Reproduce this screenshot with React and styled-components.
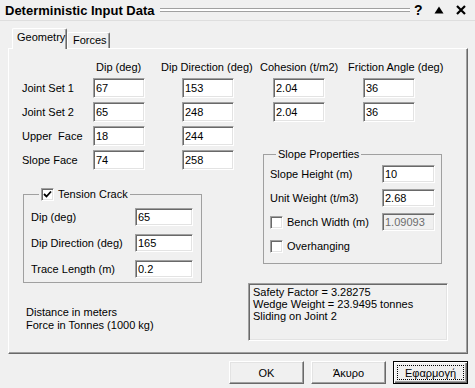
import React from 'react'
import styled, { createGlobalStyle } from 'styled-components'

const GlobalStyle = createGlobalStyle`
  html, body {
    margin: 0;
    padding: 0;
    background: #f0f0f0;
  }
  body {
    font-family: "Liberation Sans", Arial, sans-serif;
    font-size: 11px;
    color: #000;
  }
`

const Window = styled.div`
  width: 475px;
  height: 388px;
  background: #f0f0f0;
  overflow: hidden;
  display: flex;
  flex-direction: column;
`

const TitleBar = styled.div`
  height: 21px;
  box-sizing: border-box;
  display: flex;
  align-items: center;
  padding-left: 5px;
  border-bottom: 1px solid #dedede;
`

const TitleText = styled.div`
  font-size: 13px;
  font-weight: bold;
  white-space: nowrap;
`

const Grip = styled.div`
  flex: 1;
  height: 2px;
  margin: 0 4px 0 5px;
  background: #fff;
  border-top: 1px solid #a0a0a0;
  border-bottom: 1px solid #a0a0a0;
`

const Controls = styled.div`
  display: flex;
  align-items: center;
  gap: 12px;
  padding-right: 9px;
`

const HelpMark = styled.span`
  font-size: 14px;
  font-weight: bold;
  line-height: 14px;
  width: 8px;
`

const Body = styled.div`
  padding-left: 8px;
`

const TabStrip = styled.div`
  display: flex;
  align-items: flex-end;
  margin-top: 7px;
  padding-left: 4px;
  height: 20px;
`

const Tab = styled.div`
  position: relative;
  z-index: 1;
  box-sizing: border-box;
  width: ${p => p.$w}px;
  height: ${p => (p.$active ? 21 : 16)}px;
  margin-bottom: ${p => (p.$active ? -1 : 0)}px;
  padding: ${p => (p.$active ? '2px 0 0 4px' : '1px 0 0 5px')};
  line-height: 13px;
  background: #f0f0f0;
  border-top: 1px solid #fff;
  border-left: 1px solid #fff;
  border-right: 1px solid #696969;
  box-shadow: inset -1px 0 #a0a0a0;
  border-radius: 2px 2px 0 0;
  white-space: nowrap;
`

const Panel = styled.div`
  box-sizing: border-box;
  width: 460px;
  height: 306px;
  padding: 12px 0 0 13px;
  border-top: 1px solid #fff;
  border-left: 1px solid #fff;
  border-right: 1px solid #696969;
  border-bottom: 1px solid #696969;
  box-shadow: inset -1px -1px #a0a0a0;
`

const Table = styled.div`
  display: grid;
  grid-template-columns: ${p => p.$cols};
  row-gap: 4px;
  align-items: center;
`

const Header = styled.div`
  height: 13px;
  line-height: 13px;
  white-space: nowrap;
  margin-left: ${p => p.$shift || 0}px;
`

const Label = styled.div`
  white-space: nowrap;
  line-height: 13px;
`

const Field = styled.input`
  box-sizing: border-box;
  width: ${p => p.$w}px;
  height: ${p => p.$h || 20}px;
  margin: 0;
  padding: 0 0 0 2px;
  font: inherit;
  font-size: 11px;
  color: ${p => (p.disabled ? '#6d6d6d' : '#000')};
  background: ${p => (p.disabled ? '#f0f0f0' : '#fff')};
  border: 1px solid;
  border-color: #a0a0a0 #fff #fff #a0a0a0;
  box-shadow: inset 1px 1px #696969, inset -1px -1px #e3e3e3;
  outline: none;
`

const Lower = styled.div`
  display: flex;
  margin-top: 4px;
`

const LeftCol = styled.div`
  width: 226px;
  display: flex;
  flex-direction: column;
`

const RightCol = styled.div`
  display: flex;
  flex-direction: column;
  padding-top: 22px;
`

const Group = styled.fieldset`
  box-sizing: border-box;
  width: 179px;
  min-width: 0;
  margin: ${p => p.$margin};
  padding: ${p => p.$pad};
  border: 1px solid #a0a0a0;
`

const Legend = styled.legend`
  display: flex;
  align-items: center;
  gap: 4px;
  height: 13px;
  line-height: 13px;
  margin-left: ${p => p.$indent}px;
  padding: 0 2px;
`

const GroupGrid = styled.div`
  display: grid;
  grid-template-columns: ${p => p.$cols};
  row-gap: ${p => p.$gap}px;
  grid-auto-rows: 18px;
  align-items: center;
`

const CheckRow = styled.div`
  display: flex;
  align-items: center;
  gap: 4px;
  white-space: nowrap;
`

const Box = styled.span`
  box-sizing: border-box;
  width: 13px;
  height: 13px;
  flex: none;
  display: flex;
  align-items: center;
  justify-content: center;
  background: #fff;
  border: 1px solid;
  border-color: #a0a0a0 #fff #fff #a0a0a0;
  box-shadow: inset 1px 1px #696969, inset -1px -1px #e3e3e3;
`

const Notes = styled.div`
  margin: 23px 0 0 4px;
  line-height: 13px;
`

const Results = styled.div`
  box-sizing: border-box;
  width: 200px;
  height: 58px;
  margin: 19px 0 0 0;
  padding: 2px 4px;
  line-height: 12px;
  border: 1px solid;
  border-color: #a0a0a0 #fff #fff #a0a0a0;
  box-shadow: inset 1px 1px #696969, inset -1px -1px #e3e3e3;
`

const Footer = styled.div`
  display: flex;
  justify-content: flex-end;
  gap: 7px;
  padding: 7px 7px 0 0;
`

const Button = styled.div`
  position: relative;
  box-sizing: border-box;
  width: 75px;
  height: 23px;
  display: flex;
  align-items: center;
  justify-content: center;
  background: #f0f0f0;
  border: 1px solid;
  border-color: ${p => (p.$default ? '#000' : '#fff #696969 #696969 #fff')};
  box-shadow: ${p =>
    p.$default
      ? 'inset 1px 1px #fff, inset -1px -1px #696969, inset -2px -2px #a0a0a0'
      : 'inset -1px -1px #a0a0a0, inset 1px 1px #e3e3e3'};

  &::after {
    content: '';
    display: ${p => (p.$default ? 'block' : 'none')};
    position: absolute;
    inset: 3px 3px 3px 3px;
    border: 1px dotted #000;
  }
`

function Check({ checked }) {
  return (
    <Box>
      {checked && (
        <svg width="9" height="9" viewBox="0 0 9 9">
          <polyline points="1,4 3.5,6.5 8,1.5" fill="none" stroke="#000" strokeWidth="1.8" />
        </svg>
      )}
    </Box>
  )
}

const rows = [
  ['Joint Set 1', '67', '153', '2.04', '36'],
  ['Joint Set 2', '65', '248', '2.04', '36'],
]

const faces = [
  ['Upper\u00a0 Face', '18', '244'],
  ['Slope Face', '74', '258'],
]

export default function App() {
  return (
    <Window>
      <GlobalStyle />
      <TitleBar>
        <TitleText>Deterministic Input Data</TitleText>
        <Grip />
        <Controls>
          <HelpMark>?</HelpMark>
          <svg width="10" height="8" viewBox="0 0 10 8">
            <polygon points="5,0.5 9.5,7.5 0.5,7.5" fill="#000" />
          </svg>
          <svg width="10" height="10" viewBox="0 0 10 10">
            <path d="M1 1 L9 9 M9 1 L1 9" stroke="#000" strokeWidth="2.2" />
          </svg>
        </Controls>
      </TitleBar>

      <Body>
        <TabStrip>
          <Tab $active $w={55}>Geometry</Tab>
          <Tab $w={43}>Forces</Tab>
        </TabStrip>

        <Panel>
          <Table $cols="71px 89px 91px 90px 52px">
            <span />
            <Header $shift={3}>Dip (deg)</Header>
            <Header $shift={-21}>Dip Direction (deg)</Header>
            <Header $shift={-13}>Cohesion (t/m2)</Header>
            <Header $shift={-15}>Friction Angle (deg)</Header>
            {rows.map(r => (
              <React.Fragment key={r[0]}>
                <Label>{r[0]}</Label>
                {r.slice(1).map((v, i) => (
                  <Field key={i} $w={52} defaultValue={v} readOnly />
                ))}
              </React.Fragment>
            ))}
          </Table>

          <Lower>
            <LeftCol>
              <Table $cols="71px 89px 52px">
                {faces.map(r => (
                  <React.Fragment key={r[0]}>
                    <Label>{r[0]}</Label>
                    <Field $w={52} defaultValue={r[1]} readOnly />
                    <Field $w={52} defaultValue={r[2]} readOnly />
                  </React.Fragment>
                ))}
              </Table>

              <Group $margin="18px 0 0 1px" $pad="7px 0 4px 7px">
                <Legend $indent={8}>
                  <Check checked />
                  <span>Tension Crack</span>
                </Legend>
                <GroupGrid $cols="104px 58px" $gap={8}>
                  <Label>Dip (deg)</Label>
                  <Field $w={58} $h={18} defaultValue="65" readOnly />
                  <Label>Dip Direction (deg)</Label>
                  <Field $w={58} $h={18} defaultValue="165" readOnly />
                  <Label>Trace Length (m)</Label>
                  <Field $w={58} $h={18} defaultValue="0.2" readOnly />
                </GroupGrid>
              </Group>

              <Notes>
                Distance in meters
                <br />
                Force in Tonnes (1000 kg)
              </Notes>
            </LeftCol>

            <RightCol>
              <Group $margin="0 0 0 15px" $pad="4px 0 8px 6px">
                <Legend $indent={6}>Slope Properties</Legend>
                <GroupGrid $cols="112px 53px" $gap={6}>
                  <Label>Slope Height (m)</Label>
                  <Field $w={53} $h={18} defaultValue="10" readOnly />
                  <Label>Unit Weight (t/m3)</Label>
                  <Field $w={53} $h={18} defaultValue="2.68" readOnly />
                  <CheckRow>
                    <Check />
                    <span>Bench Width (m)</span>
                  </CheckRow>
                  <Field $w={53} $h={18} defaultValue="1.09093" disabled />
                  <CheckRow>
                    <Check />
                    <span>Overhanging</span>
                  </CheckRow>
                </GroupGrid>
              </Group>

              <Results>
                Safety Factor = 3.28275
                <br />
                Wedge Weight = 23.9495 tonnes
                <br />
                Sliding on Joint 2
              </Results>
            </RightCol>
          </Lower>
        </Panel>
      </Body>

      <Footer>
        <Button>OK</Button>
        <Button>Άκυρο</Button>
        <Button $default>Εφαρμογή</Button>
      </Footer>
    </Window>
  )
}
